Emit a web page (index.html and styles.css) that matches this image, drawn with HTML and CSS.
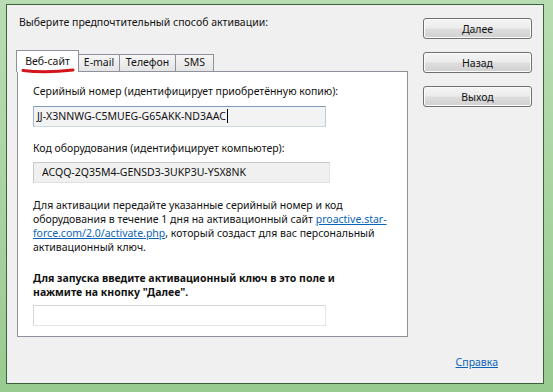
FILE: index.html
```html
<!DOCTYPE html>
<html lang="ru">
<head>
  <meta charset="UTF-8" />
  <meta name="viewport" content="width=device-width, initial-scale=1.0" />
  <title>Активация</title>

  <link rel="stylesheet" href="styles.css">
</head>
<body>

  <div class="window">
    <div class="layout">
      <div class="content">
        <p class="prompt">Выберите предпочтительный способ активации:</p>

        <!-- Вкладки -->
        <div class="tabs">
          <div class="tab tab-active">
            Веб-сайт
            <svg class="mark" width="54" height="7" viewBox="0 0 54 7">
              <path d="M2 3.5 C 15 5, 35 5, 52 3" fill="none" stroke="#d2161b" stroke-width="3" stroke-linecap="round" />
            </svg>
          </div>
          <div class="tab tab-mail">E-mail</div>
          <div class="tab tab-phone">Телефон</div>
          <div class="tab tab-sms">SMS</div>
        </div>

        <div class="panel">
          <div class="label">Серийный номер (идентифицирует приобретённую копию):</div>
          <div class="field field-serial">JJ-X3NNWG-C5MUEG-G65AKK-ND3AAC<span class="caret"></span></div>

          <div class="label label-hw">Код оборудования (идентифицирует компьютер):</div>
          <div class="field field-hw">ACQQ-2Q35M4-GENSD3-3UKP3U-YSX8NK</div>

          <p class="info">
            Для активации передайте указанные серийный номер и код<br>
            оборудования в течение 1 дня на активационный сайт <a href="#">proactive.star-<br>force.com/2.0/activate.php</a>, который создаст для вас персональный<br>
            активационный ключ.
          </p>

          <p class="hint">
            Для запуска введите активационный ключ в это поле и<br>
            нажмите на кнопку "Далее".
          </p>

          <div class="field field-key"></div>
        </div>
      </div>

      <!-- Кнопки -->
      <div class="buttons">
        <button class="btn">Далее</button>
        <button class="btn">Назад</button>
        <button class="btn">Выход</button>
      </div>
    </div>

    <div class="footer">
      <a href="#">Справка</a>
    </div>
  </div>

</body>
</html>
```

FILE: styles.css
```css
body {
  margin: 0;
  height: 392px;
  overflow: hidden;
  background: linear-gradient(#b9ddb2, #98cb90);
  font-family: "Noto Sans", "Open Sans", sans-serif;
  font-size: 10.5px;
  color: #111;
}

.window {
  box-sizing: border-box;
  height: 380px;
  margin: 4px 9px 0 6px;
  border: 1px solid #3c5f3c;
  background-color: #f0f0f0;
}

.layout {
  display: flex;
}

.content {
  padding: 10px 0 0 10px;
}

.prompt {
  margin: 0 0 0 2px;
  line-height: 14px;
}

.tabs {
  display: flex;
  align-items: flex-end;
  height: 21px;
  margin: 21px 0 0 -1px;
}

.tab {
  box-sizing: border-box;
  height: 17px;
  margin-left: -1px;
  border: 1px solid #8e929a;
  border-bottom: none;
  background: linear-gradient(#f6f6f6, #e4e4e4);
  text-align: center;
  line-height: 15px;
}

.tab-active {
  position: relative;
  z-index: 1;
  width: 63px;
  height: 22px;
  margin-left: 0;
  margin-bottom: -1px;
  background: #fff;
  line-height: 20px;
}

.tab-mail {
  width: 42px;
}

.tab-phone {
  width: 57px;
}

.tab-sms {
  width: 39px;
}

.mark {
  position: absolute;
  left: 4px;
  top: 16px;
}

.panel {
  box-sizing: border-box;
  width: 391px;
  height: 266px;
  padding: 12px 15px 0;
  border: 1px solid #8e929a;
  background-color: #fff;
}

.label {
  line-height: 14px;
}

.label-hw {
  margin-top: 14px;
}

.field {
  box-sizing: border-box;
  height: 21px;
  width: 293px;
  border: 1px solid #d5d5d5;
  line-height: 19px;
}

.field-serial {
  margin-top: 8px;
  padding-left: 3px;
  border-color: #7f9cbd #b8cde4 #c9d9ea #9fb6d2;
  background-color: #f3f3f3;
}

.caret {
  display: inline-block;
  width: 1px;
  height: 14px;
  margin-left: 1px;
  vertical-align: -3px;
  background-color: #000;
}

.field-hw {
  width: 297px;
  margin-top: 7px;
  padding-left: 8px;
  border-color: #c8c8c8 #e2e2e2 #e2e2e2 #c8c8c8;
  background-color: #f0f0f0;
}

.info {
  margin: 15px 0 0;
  line-height: 14px;
  white-space: nowrap;
}

.info a,
.footer a {
  color: #0b63b9;
}

.hint {
  margin: 17px 0 0;
  line-height: 14px;
  font-weight: bold;
  white-space: nowrap;
}

.field-key {
  margin-top: 6px;
  border-color: #d6d6d6 #e6e6e6 #e6e6e6 #d6d6d6;
  background-color: #fff;
}

.buttons {
  display: flex;
  flex-direction: column;
  gap: 13px;
  padding-top: 13px;
  margin-left: 15px;
}

.btn {
  width: 109px;
  height: 21px;
  padding: 0;
  border: 1px solid #707070;
  border-radius: 3px;
  background: linear-gradient(#f4f4f4 0%, #ececec 48%, #dedede 52%, #d0d0d0 100%);
  box-shadow: inset 0 0 0 1px #fbfbfb;
  font-family: inherit;
  font-size: 10.5px;
  color: #111;
}

.footer {
  margin-top: 18px;
  padding-right: 45px;
  text-align: right;
  line-height: 14px;
}
```
